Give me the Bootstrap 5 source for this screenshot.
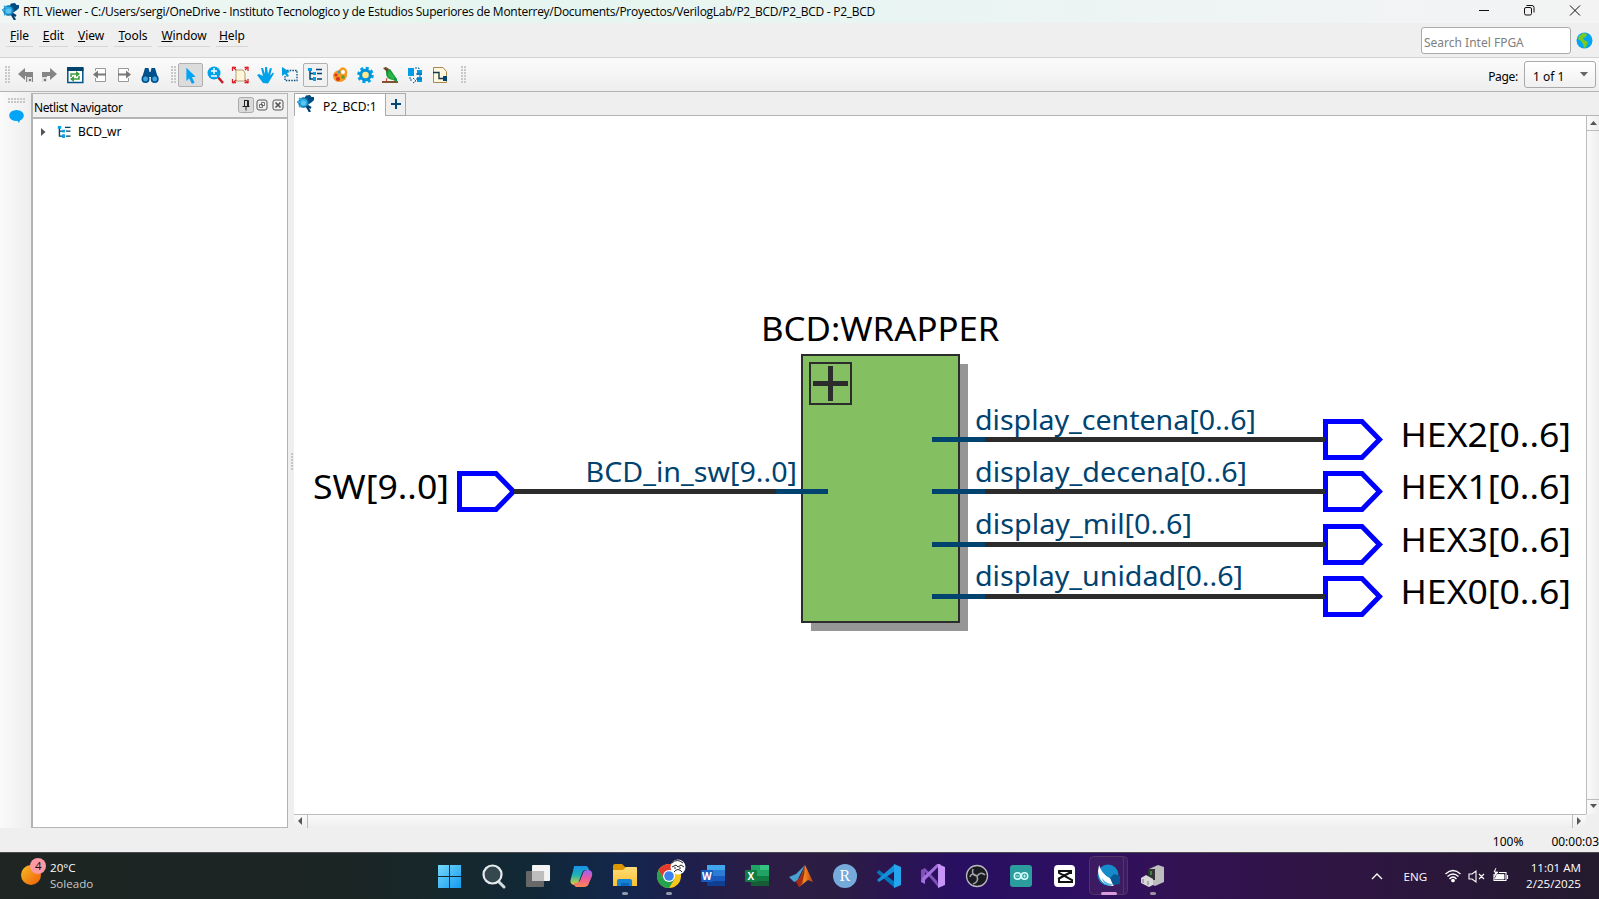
<!DOCTYPE html>
<html lang="en">
<head>
<meta charset="utf-8">
<title>RTL Viewer</title>
<link rel="stylesheet" href="https://cdn.jsdelivr.net/npm/bootstrap@5.3.0/dist/css/bootstrap.min.css">
<style>
body{width:1599px;height:899px;overflow:hidden;background:#efefef;color:#000;font:12px/16px "Noto Sans",sans-serif}
svg{display:block;flex:none}
.titlebar{height:23px;background:linear-gradient(90deg,#eff6f3,#e6f5ef 30%,#eaf5f3 60%,#f2f3f5 90%,#f3f3f3);padding-left:2px}
.title-text{font:12px/24px "Open Sans","Noto Sans",sans-serif;letter-spacing:-.272px;margin-left:4px;white-space:nowrap}
.menubar{height:35px;border-bottom:1px solid #d3d3d3;padding-left:6px}
.menu-entry{height:24px;border-bottom:1px solid #d6d6d6;line-height:26px;text-align:center;margin-right:6px;letter-spacing:-.05px}
.search-box{width:150px;height:27px;margin-top:4px;border:1px solid #aaa;border-radius:3px;background:#fff;color:#808080;line-height:29px;padding-left:2px}
.toolbar{height:34px;border-bottom:1px solid #b4b4b4;background:linear-gradient(#fbfbfb,#eee)}
.grip{width:5px;height:17px;background:radial-gradient(circle at 1px 1px,#c6c6c6 .7px,transparent .9px) 0 0/3px 3px}
.tool{width:25px;height:24px}
.tool-on{border:1px solid #b0b0b0;border-radius:2px;background:#dcdcdc}
.page-box{width:72px;height:27px;border:1px solid #aaa;border-radius:3px;background:linear-gradient(#fff,#f0f0f0);padding:0 7px 0 8px}
.side-strip{width:31px;background:linear-gradient(90deg,#fafafa,#eee)}
.dock{width:257px;border:1px solid #b4b4b4;border-left-width:2px;margin-top:1px;background:#fff}
.dock-head{height:25px;background:#f0f0f0;border-bottom:2px solid #b4b4b4;padding:0 1px 0 1px}
.dock-btn{width:16px;height:16px;margin-top:-2px}
.splitter{width:6px}
.tabs{height:24px;border-bottom:1px solid #b4b4b4}
.tab-on{width:92px;height:24px;margin-top:1px;border:1px solid #aaa;border-bottom:1px solid #999;background:#fff;padding-left:2px}
.tab-add{width:20px;height:23px;margin-top:1px;border:1px solid #aaa;border-left:0}
.vscroll{width:13px;border-left:1px solid #bbb;background:linear-gradient(90deg,#fafafa,#eee)}
.hscroll{width:1292px;height:14px;border-top:1px solid #bbb;background:linear-gradient(#fafafa,#eee)}
.statusbar{height:24px;line-height:27px}
.taskbar{height:47px;border-top:1px solid #4a4a50;color:#fff;font-family:"Open Sans","Noto Sans",sans-serif;font-size:11.6px;background:linear-gradient(90deg,#1e2523 0,#1b2524 22%,#17282b 27%,#112836 33%,#13264c 39%,#1e1f4c 43%,#2b1d45 48%,#2b1d42 52%,#2b1552 56%,#280f61 60%,#2e0f61 68%,#331252 74%,#2e1542 84%,#231b2e 100%)}
.weather{width:426.500px;padding-left:20px}
.app{width:44.060px;height:46px}
.net text{font-family:"Noto Sans",sans-serif}
</style>
<script src="https://cdn.jsdelivr.net/npm/bootstrap@5.3.0/dist/js/bootstrap.bundle.min.js"></script>
</head>
<body class="d-flex flex-column">
<svg width="0" height="0" class="position-absolute"><defs>
<symbol id="viewer" viewBox="0 0 17 17"><path d="M9 .500 13 0l1.500 2H17v3l-2 2-3 2-3-1-2-4z" fill="#004b80"/><path d="m9 10 4 7" stroke="#003c71" stroke-width="2.200"/><path d="m9 10 5 3" stroke="#003c71" stroke-width="2.200"/><circle cx="6.500" cy="7.500" r="4.700" fill="#28a8e0" stroke="#0a6ea5" stroke-width="1.300"/><path d="M0 7h3M2 3l3 2M2 12l2-1" stroke="#35aee8" stroke-width="1.800"/><circle cx="6.500" cy="8" r="2.500" fill="#5cc5f2"/></symbol>
<symbol id="tree" viewBox="0 0 15 13"><path d="M2 2v9h4M2 5.500h4M8 1.500h6M9 5.500h5M9 11h5" fill="none" stroke="#00456f" stroke-width="1.500"/><path d="M0 0h4v3H0zM5 4h3v3H5zM5 9h3v4H5z" fill="#00a3e8"/></symbol>
<linearGradient id="sun" x1="0" y1="0" x2="1" y2="1"><stop stop-color="#f6bd26"/><stop offset="1" stop-color="#f15c06"/></linearGradient>
<linearGradient id="win" x1="0" y1="0" x2="1" y2="1"><stop stop-color="#76d9fb"/><stop offset="1" stop-color="#139af0"/></linearGradient>
<linearGradient id="cpa" x1="0" y1="0" x2="0" y2="1"><stop stop-color="#188fec"/><stop offset=".5" stop-color="#20b5ae"/><stop offset="1" stop-color="#e8d22e"/></linearGradient>
<linearGradient id="cpb" x1="0" y1="0" x2="0" y2="1"><stop stop-color="#9a63f3"/><stop offset=".5" stop-color="#ed5aa0"/><stop offset="1" stop-color="#fb894d"/></linearGradient>
<linearGradient id="gold" x1="0" y1="0" x2="0" y2="1"><stop stop-color="#ffdd78"/><stop offset="1" stop-color="#fbc02e"/></linearGradient>
<linearGradient id="fire"><stop stop-color="#8f2012"/><stop offset=".5" stop-color="#f08b22"/><stop offset="1" stop-color="#c03c10"/></linearGradient>
</defs></svg>

<header class="titlebar d-flex align-items-center">
 <svg width="17" height="17"><use href="#viewer"/></svg>
 <span class="title-text">RTL Viewer - C:/Users/sergi/OneDrive - Instituto Tecnologico y de Estudios Superiores de Monterrey/Documents/Proyectos/VerilogLab/P2_BCD/P2_BCD - P2_BCD</span>
 <svg class="ms-auto" width="126" height="23" fill="none" stroke="#111"><path d="M6 10.500h10M97 5.500l10 10m0-10-10 10"/><rect x="51.500" y="7.500" width="7" height="7.500" rx="1.500"/><path d="M53.500 5.500H59q2 0 2 2v5"/></svg>
</header>

<nav class="menubar d-flex">
 <div class="menu-entry" style="width:27px"><u>F</u>ile</div><div class="menu-entry" style="width:29px"><u>E</u>dit</div><div class="menu-entry" style="width:34px"><u>V</u>iew</div><div class="menu-entry" style="width:38px"><u>T</u>ools</div><div class="menu-entry" style="width:52px"><u>W</u>indow</div><div class="menu-entry" style="width:32px"><u>H</u>elp</div>
 <div class="search-box ms-auto">Search Intel FPGA</div>
 <svg width="17" height="17" style="margin:9px 6px 0 5px" viewBox="0 0 17 17"><circle cx="8.500" cy="8.500" r="8" fill="#00a5f4"/><path d="m3 4 4-3 4 1-1 3-3 1 1 2 4 2-2 5-2 1-1-4-2-3-3-2z" fill="#79cb21"/></svg>
</nav>

<div class="toolbar d-flex align-items-center">
 <div class="grip" style="margin:0 3px 0 5px"></div>
 <div class="d-flex">
 <svg class="tool" viewBox="0 0 25 24"><path d="m5 11 7-6v4h8v10h-7v-6h-1v4z" fill="#858585"/><path d="M14 14h5v5h-5z" fill="#ddd"/><path d="M16 16h2v2h-2z" fill="#777"/></svg>
 <svg class="tool" viewBox="0 0 25 24"><path d="m19 11-7-6v4H4v10h5v-6h3v4z" fill="#858585"/><path d="M4 14h5v5H4z" fill="#ddd"/><path d="M6 16h2v2H6z" fill="#777"/></svg>
 <svg class="tool" viewBox="0 0 25 24"><path d="M4.800 5.500h15v14h-15z" fill="#fff" stroke="#00538a" stroke-width="1.500"/><path d="M4 4h16.500v4H4z" fill="#00436f"/><path d="M8 14v-3h7M16 13v3H9" fill="none" stroke="#3d9d3d" stroke-width="1.500"/><path d="m13 8 4 3-4 3zM11 13l-4 3 4 3z" fill="#3d9d3d"/></svg>
 <svg class="tool" viewBox="0 0 25 24"><path d="M7.500 8V5.500h10V18.500h-10V15" fill="#fff" stroke="#999"/><path d="M8 11.500h10" stroke="#777" stroke-width="2"/><path d="m5 11.500 5-4v8z" fill="#777"/></svg>
 <svg class="tool" viewBox="0 0 25 24"><path d="M15.500 8V5.500h-10V18.500h10V15" fill="#fff" stroke="#999"/><path d="M5 11.500h10" stroke="#777" stroke-width="2"/><path d="m18 11.500-5-4v8z" fill="#777"/></svg>
 <svg class="tool" viewBox="0 0 25 24"><path d="m7 5 3.500 0 1 4h1l1-4H17l3 10v3h-6v-4h-4v4H4v-3z" fill="#00518b"/><circle cx="7.500" cy="16" r="3.200" fill="#3ea6dc" stroke="#00518b" stroke-width="1.600"/><circle cx="16.700" cy="16" r="3.200" fill="#3ea6dc" stroke="#00518b" stroke-width="1.600"/></svg>
 </div>
 <div class="grip" style="margin:0 3px 0 8px"></div>
 <div class="d-flex" style="margin-left:-1px">
 <svg class="tool tool-on" viewBox="0 0 25 24"><path d="m8 4 10 10-4 .500 3 6-3 1-3-6-3 3z" fill="#00a3f5"/></svg>
 <svg class="tool" viewBox="0 0 25 24"><path d="m14 13 6 7" stroke="#c51d25" stroke-width="2.500"/><circle cx="11" cy="10" r="6.500" fill="#00a1ec"/><path d="M8 8h6M11 5v6M8 13h6" stroke="#fff" stroke-width="1.400"/></svg>
 <svg class="tool" viewBox="0 0 25 24"><path d="M8 7h7l2 3v8H8z" fill="#fff6d9" stroke="#b49d70"/><path d="m5 4 3 3M20 4l-3 3M5 20l3-3M20 20l-3-3" stroke="#e11b22" stroke-width="1.300"/><path d="M4.500 8V4.500H8M16.500 4.500h3.500V8M4.500 16v3.500H8M16.500 19.500h3.500V16" fill="none" stroke="#e11b22" stroke-width="1.300"/></svg>
 <svg class="tool" viewBox="0 0 25 24"><path d="m10 20-6-8 2-1 4 2-2-8h2l2 6V4h2l1 7 2-6 2 .500-2 7 3-3 1 1-6 10z" fill="#00a3ea"/></svg>
 <svg class="tool" viewBox="0 0 25 24"><path d="M9 7.500h10v10H7V13" fill="none" stroke="#004b80" stroke-dasharray="1.500 1.200" stroke-width="1.300"/><path d="m4 4 8 5-3 1 2 3-2 1-2-3-3 2z" fill="#009de2"/></svg>
 <div class="tool tool-on d-flex align-items-center justify-content-center" style="background:#f1f1f1"><svg width="15" height="13"><use href="#tree"/></svg></div>
 <svg class="tool" viewBox="0 0 25 24"><path d="M5 12q1-4 6-5 2-4 6-2 3 2 2 8-2 6-8 6-6 0-6-7" fill="#f79a20"/><circle cx="8" cy="12" r="1.600" fill="#e12a29"/><circle cx="11" cy="9" r="1.500" fill="#28a3d8"/><circle cx="15" cy="9" r="2" fill="#fff"/><circle cx="10" cy="16" r="2" fill="#d42e26"/><circle cx="15" cy="14" r="1.800" fill="#549e38"/></svg>
 <svg class="tool" viewBox="0 0 25 24"><circle cx="12.500" cy="12" r="6.800" fill="none" stroke="#00a0e8" stroke-width="3" stroke-dasharray="3 2.340"/><circle cx="12.500" cy="12" r="4.800" fill="#ffe88f" stroke="#0092d9" stroke-width="3"/></svg>
 <svg class="tool" viewBox="0 0 25 24"><path d="M4 18h16v2H4z" fill="#81522d"/><path d="m8 7 4-1 7 10v3l-4-2q-7-1-7-7z" fill="#149b39"/><path d="m11 8 6 6-2 3-5-4z" fill="#2cb44a"/><path d="m5 5 3-1 3 2-2 3-2-2z" fill="#6e4b26"/><path d="m9 15-1 4" stroke="#c43c21"/></svg>
 <svg class="tool" viewBox="0 0 25 24"><path d="M5 5h6v8H5zM14 7h5v5h-5zM14 14h5v5h-5z" fill="#009ce5"/><path d="M12 5h4v2M7 14v3h3M10 15l3 3-3 2M17 12v2" fill="none" stroke="#00609a" stroke-dasharray="2 1"/><path d="M13 11h6M13 16h6" stroke="#00609a"/></svg>
 <svg class="tool" viewBox="0 0 25 24"><path d="M5.500 4.500H15l3.500 4V19.500h-13z" fill="#fff8df" stroke="#a8884f"/><path d="M5 9.500h6v6h6" fill="none" stroke="#16374e" stroke-width="1.400"/><path d="M15 13h4v5h-4z" fill="#004671"/></svg>
 </div>
 <div class="grip" style="margin-left:8px"></div>
 <span class="ms-auto" style="margin-right:6px;padding-top:4px;letter-spacing:-.3px">Page:</span>
 <div class="page-box d-flex align-items-center justify-content-between" style="margin-right:3px"><span style="padding-top:4px">1 of 1</span><svg width="8" height="5"><path d="M0 0h8L4 4.500z" fill="#666"/></svg></div>
</div>

<main class="d-flex" style="height:736px">
 <aside class="side-strip"><div class="grip" style="width:17px;height:5px;margin:6px 0 0 8px"></div><svg width="15" height="13" style="margin:7px 0 0 8.500px"><ellipse cx="7.500" cy="5.500" rx="7.300" ry="5.500" fill="#00a5f5"/><path d="m7 9 3 4 2-5z" fill="#00a5f5"/></svg></aside>
 <section class="dock">
  <div class="dock-head d-flex align-items-center"><span style="padding-top:3px;letter-spacing:-.4px;word-spacing:1px" class="d-none"></span><span style="padding-top:4px;letter-spacing:-.4px">Netlist Navigator</span>
   <svg class="dock-btn ms-auto" viewBox="0 0 16 16" fill="none" stroke="#222"><rect x=".5" y=".5" width="15" height="15" rx="2" fill="#dadada" stroke="#aaa"/><path d="M6.500 3v6M6 3.500h4.500V9M9.500 3v6M4.500 9.500h7M8 10v3.500"/></svg>
   <svg class="dock-btn" viewBox="0 0 16 16" fill="none" stroke="#555"><rect x="3" y="3" width="10" height="10" rx="2"/><path d="M7.500 5.500h3v3h-3zM5.500 7.500h3v3h-3z" stroke-width=".8"/></svg>
   <svg class="dock-btn" viewBox="0 0 16 16" fill="none" stroke="#555"><rect x="3" y="3" width="10" height="10" rx="2"/><path d="m5.500 5.500 5 5m0-5-5 5" stroke-width="1.700"/></svg>
  </div>
  <div class="d-flex align-items-center" style="height:25px;padding-left:8px"><svg width="6" height="8"><path d="m0 0 4.500 4L0 8z" fill="#555"/></svg><svg width="15" height="12" style="margin-left:10px" viewBox="0 0 15 13"><use href="#tree"/></svg><span style="margin-left:6px;padding-top:1px;letter-spacing:-.1px">BCD_wr</span></div>
 </section>
 <div class="splitter d-flex align-items-center"><div class="grip" style="width:2px;height:17px;margin:2px 0 0 3px"></div></div>
 <section class="flex-fill d-flex flex-column">
  <div class="tabs d-flex"><div class="tab-on d-flex"><svg width="17" height="17" style="margin-top:1px"><use href="#viewer"/></svg><span style="margin:5px 0 0 9px">P2_BCD:1</span></div><div class="tab-add d-flex align-items-center justify-content-center"><svg width="10" height="10" style="margin-top:-2px"><path d="M5 0v10M0 5h10" stroke="#00477a" stroke-width="2"/></svg></div></div>
  <div class="d-flex" style="height:698px">
  <svg class="net bg-white" width="1292" height="698" viewBox="294 116 1292 698" font-size="33.500">
   <path d="M811 364h157v267H811z" fill="#969696"/><rect x="802" y="355" width="157" height="267" fill="#84c061" stroke="#2c2c2c" stroke-width="2"/>
   <path d="M810 363h41v41h-41z" fill="none" stroke="#2c2c2c" stroke-width="2"/><path d="M813 383.500h35M830.500 366v35" stroke="#2c2c2c" stroke-width="5"/>
   <g fill="none" stroke="#00f" stroke-width="5"><path d="M459.500 473.500h36.500l17.500 18-17.500 18h-36.500z"/><path id="pin" d="M1325.500 421.500h36.500l17.500 18-17.500 18h-36.500z"/><use href="#pin" y="52"/><use href="#pin" y="105"/><use href="#pin" y="157"/></g>
   <path d="M514 491.500h262M985 439.500h340M985 491.500h340M985 544.500h340M985 596.500h340" stroke="#2c2c2c" stroke-width="5"/>
   <path d="M776 491.500h52M932 439.500h53M932 491.500h53M932 544.500h53M932 596.500h53" stroke="#00436f" stroke-width="5"/>
   <g>
   <text x="761" y="341" textLength="238.500" lengthAdjust="spacingAndGlyphs">BCD:WRAPPER</text>
   <text x="313" y="499" textLength="136" lengthAdjust="spacingAndGlyphs">SW[9..0]</text>
   <text x="1400.500" y="447" textLength="170.500" lengthAdjust="spacingAndGlyphs">HEX2[0..6]</text><text x="1400.500" y="499" textLength="170.500" lengthAdjust="spacingAndGlyphs">HEX1[0..6]</text><text x="1400.500" y="552" textLength="170.500" lengthAdjust="spacingAndGlyphs">HEX3[0..6]</text><text x="1400.500" y="604" textLength="170.500" lengthAdjust="spacingAndGlyphs">HEX0[0..6]</text>
   </g>
   <g fill="#00436f" font-size="27.500"><text x="585.500" y="482" textLength="211.500" lengthAdjust="spacingAndGlyphs">BCD_in_sw[9..0]</text>
   <text x="975" y="430" textLength="281" lengthAdjust="spacingAndGlyphs">display_centena[0..6]</text><text x="975" y="482" textLength="272" lengthAdjust="spacingAndGlyphs">display_decena[0..6]</text><text x="975" y="534" textLength="217" lengthAdjust="spacingAndGlyphs">display_mil[0..6]</text><text x="975" y="586" textLength="268" lengthAdjust="spacingAndGlyphs">display_unidad[0..6]</text></g>
  </svg>
  <div class="vscroll d-flex flex-column justify-content-between"><svg width="12" height="15"><path d="M3 9h7L6.500 5z" fill="#555"/><path d="M0 14.500h12" stroke="#bbb"/></svg><svg width="12" height="15"><path d="M3 5h7L6.500 9z" fill="#555"/><path d="M0 .5h12" stroke="#bbb"/></svg></div>
  </div>
  <div class="hscroll d-flex justify-content-between"><svg width="14" height="13"><path d="M8 2v8L4 6z" fill="#555"/><path d="M13.500 0v13" stroke="#bbb"/></svg><svg width="14" height="13"><path d="M5 2v8l4-4z" fill="#555"/><path d="M.5 0v13" stroke="#bbb"/></svg></div>
 </section>
</main>

<div class="statusbar d-flex justify-content-end"><span style="margin-right:28px">100%</span><span>00:00:03</span></div>

<footer class="taskbar d-flex">
 <div class="weather d-flex"><svg width="30" height="46"><circle cx="11" cy="22" r="10" fill="url(#sun)"/><circle cx="18" cy="13" r="8" fill="#fd98a4"/><text x="15" y="17" font-size="11.500" fill="#111">4</text></svg><div><div style="margin-top:7px">20°C</div><div style="color:#c6cac9">Soleado</div></div></div>
 <svg class="app" viewBox="0 0 44 46"><path d="M11 12h11v11H11zM23 12h11v11H23zM11 24h11v11H11zM23 24h11v11H23z" fill="url(#win)"/></svg>
 <svg class="app" viewBox="0 0 44 46"><path d="m27 28 6 6" stroke="#d3dade" stroke-width="3" stroke-linecap="round"/><circle cx="21.500" cy="21.500" r="9" fill="#35484e" stroke="#e7ebed" stroke-width="2.200"/></svg>
 <svg class="app" viewBox="0 0 44 46"><rect x="17" y="12" width="18" height="16" rx="1" fill="#f4f4f4"/><rect x="11" y="18" width="18" height="16" rx="1" fill="#686868"/><path d="M17 18h12v10H17z" fill="#bebebe"/></svg>
 <svg class="app" viewBox="0 0 44 46"><path d="M18 13h9q2 0 3 4h-4q-2 0-3 3l-3 8q-1 4-5 4-5-1-3-7l2-7q1-5 1-5z" fill="url(#cpa)"/><path d="m26 17 4 0q4 1 3 6l-3 7q-1 4-5 4h-8q-2-1-2-4h3q3-1 4-5l2-5q1-3 4-3z" fill="url(#cpb)"/></svg>
 <svg class="app" viewBox="0 0 44 46"><path d="M10 13q0-2 2-2h7l3 3h10v8H10z" fill="#dc9700"/><path d="M10 17h10l3-3h10q1 0 1 1v18H10z" fill="url(#gold)"/><path d="M14 28q0-2 2-2h11q2 0 2 2v5H14z" fill="#1583d3"/><path d="M18 30h8v3h-8z" fill="#0d67b8"/><rect x="19" y="39" width="6" height="3" rx="1.500" fill="#9099aa"/></svg>
 <svg class="app" viewBox="0 0 44 46"><circle cx="22" cy="23" r="12" fill="#f8c71c"/><path d="M11.600 17a12 12 0 0 1 20.800 0H22l-5 9z" fill="#e43a2e"/><path d="M11.600 17a12 12 0 0 0 10.400 18l5.500-9H17z" fill="#25a24c"/><circle cx="22" cy="23" r="6" fill="#fff"/><circle cx="22" cy="23" r="4.800" fill="#3b82ee"/><circle cx="31" cy="14" r="7.500" fill="#fff"/><path d="M25 10q5-5 11 0M25 14l4-2 2 2 3-2 3 2M27 19q4-5 8 0M28 14v2M33 14v2" fill="none" stroke="#222"/><rect x="19" y="39" width="6" height="3" rx="1.500" fill="#9099aa"/></svg>
 <svg class="app" viewBox="0 0 44 46"><path d="M16 12h18v6H16z" fill="#41a5ee"/><path d="M16 17h18v6H16z" fill="#2b7cd3"/><path d="M16 23h18v6H16z" fill="#185abd"/><path d="M16 28h18v5H16z" fill="#103f91"/><rect x="10" y="17" width="12" height="12" rx="1" fill="#185abd"/><text x="11" y="27" font-size="10" font-weight="bold" fill="#fff">W</text></svg>
 <svg class="app" viewBox="0 0 44 46"><path d="M16 12h9v6h-9z" fill="#21a366"/><path d="M25 12h9v6h-9z" fill="#33c481"/><path d="M16 17h18v6H16z" fill="#21a366"/><path d="M16 23h18v5H16z" fill="#107c41"/><path d="M16 28h18v5H16z" fill="#185c37"/><rect x="10" y="17" width="12" height="12" rx="1" fill="#107c41"/><text x="12.500" y="27" font-size="10" font-weight="bold" fill="#fff">X</text></svg>
 <svg class="app" viewBox="0 0 44 46"><path d="m10 24 7-3 9-9-8 16-3 1z" fill="#4aa0cf"/><path d="M26 12q3 6 8 17l-5-2-9 7-3-6q5-2 9-16z" fill="url(#fire)"/><path d="M26 12q0 9-3 18l-3 4-3-5q6-4 9-17z" fill="#a52a17"/></svg>
 <svg class="app" viewBox="0 0 44 46"><circle cx="22" cy="23" r="12" fill="#75aadb"/><text x="16.500" y="28" font-family="Liberation Serif" font-size="16" fill="#fff">R</text></svg>
 <svg class="app" viewBox="0 0 44 46"><path d="m10 19 2-2 16 12v6L10 20z" fill="#0076bc"/><path d="m10 27 18-16v7L12 29z" fill="#168fda"/><path d="m27 11 7 3v18l-7 3z" fill="#24a5ed"/></svg>
 <svg class="app" viewBox="0 0 44 46"><path d="m10 17 4-2 12 13 2 7-14-16v8l-4 2z" fill="#8052b7"/><path d="m14 27 0 4-4-2 1-4 15-14h4z" fill="#a371df"/><path d="m27 11 7 3v18l-7 3z" fill="#c695f7"/></svg>
 <svg class="app" viewBox="0 0 44 46"><circle cx="22" cy="23" r="10.500" fill="#191b20" stroke="#b8b8bd" stroke-width="1.300"/><path d="M18 16q-2 6 4 7 4-5 8-1M22 23q2 6-4 8M15 24q1-5 7-1" fill="none" stroke="#a2a2a8" stroke-width="1.600"/></svg>
 <svg class="app" viewBox="0 0 44 46"><rect x="11" y="12" width="22" height="22" rx="3" fill="#2c9d9d"/><circle cx="18.500" cy="23" r="3.200" fill="none" stroke="#d7ffff" stroke-width="1.500"/><circle cx="25.500" cy="23" r="3.200" fill="none" stroke="#d7ffff" stroke-width="1.500"/><path d="M17 23h3m4 0h3m-1.500-1.500v3" stroke="#d7ffff" stroke-width=".8"/></svg>
 <svg class="app" viewBox="0 0 44 46"><rect x="11" y="12" width="21" height="22" rx="4" fill="#fff"/><path d="M28 21v-3H16v2l13 7v2H16v-3M28 19l-13 7" fill="none" stroke="#111" stroke-width="2"/></svg>
 <svg class="app" viewBox="0 0 44 46"><rect x="2.500" y="3.500" width="38" height="38" rx="4" fill="#4a2866" fill-opacity=".5" stroke="#543469"/><path d="M36.500 4v37" stroke="#543469"/><circle cx="21" cy="22" r="10.500" fill="#158bc9"/><path d="M12 12q4 13 19 16l-5 5Q12 32 11 18z" fill="#fff"/><path d="M15 25q4 6 11 6l-4 2q-6-2-7-8" fill="#53b7e8"/><path d="m23 25 4-4 6 2v8l-7 1z" fill="#075895"/><rect x="14" y="39" width="16" height="3" rx="1.500" fill="#dc9edb"/></svg>
 <svg class="app" viewBox="0 0 44 46"><path d="m18 16 9-4 6 2v15l-9 4-6-3z" fill="#bdbdbd"/><path d="M17 16h7v11h-7z" fill="#303435"/><path d="M20 18v4" stroke="#42dc48"/><path d="m10 25 5-3 7 4v6l-4 2-8-4z" fill="#d9d9d9"/><path d="M12 26v4M17 28v4" stroke="#777"/><rect x="19" y="39" width="6" height="3" rx="1.500" fill="#9c94a5"/></svg>
 <div class="d-flex align-items-center ms-auto" style="padding-right:18px">
  <svg width="12" height="8" fill="none" stroke="#fff" stroke-width="1.400"><path d="m1 7 5-5 5 5"/></svg>
  <span style="margin:2px 18px 0 20px">ENG</span>
  <svg width="66" height="20" viewBox="0 0 66 20" fill="none" stroke="#fff" stroke-width="1.300"><path d="M.5 8q7.500-7 15 0M2.500 10.500q5.500-5 11 0M4.500 13q3.500-4 7 0"/><circle cx="8" cy="14.500" r="1.200" fill="#fff"/><path d="M24 8h3l4-3v11l-4-3h-3zM34 8l5 5m0-5-5 5M49 8v6.500h12V6.500h-7M62.500 9v4" stroke-width="1.100"/><path d="M52 8.500h7v4.500h-9zM51 2l-2 4h4l-4 5" fill="#fff" stroke-width=".8"/></svg>
  <div class="text-end" style="margin-left:15px"><div>11:01 AM</div><div>2/25/2025</div></div>
 </div>
</footer>
</body>
</html>
